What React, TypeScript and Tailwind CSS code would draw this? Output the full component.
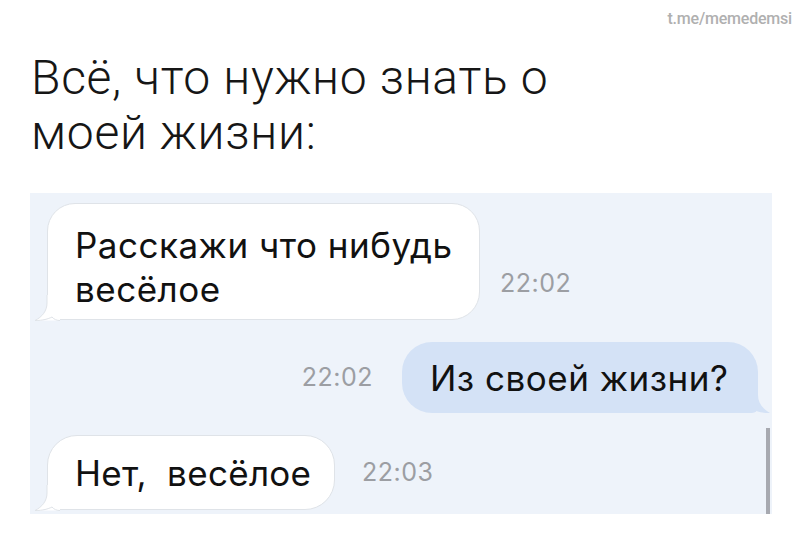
import React from "react";

function TailLeft({ className }: { className?: string }) {
    return (
        <svg
            className={className}
            width="26"
            height="26"
            viewBox="0 0 26 26"
            fill="none"
        >
            <path d="M13 0 L13 8 C13 16 8 22 1 25.5 L26 25.5 L26 0 Z" fill="#ffffff" />
            <path
                d="M13 0 L13 8 C13 16 8 22 1 25.5 C9 25.5 14 24 18 22 C20 24.5 23 25.5 26 25.5"
                stroke="#dfe3e8"
                strokeWidth="1"
            />
        </svg>
    );
}

function TailRight({ className }: { className?: string }) {
    return (
        <svg
            className={className}
            width="26"
            height="26"
            viewBox="0 0 26 26"
            fill="none"
        >
            <path d="M13 0 L13 8 C13 16 18 22 25 26 C17 26 12 24.5 8 22.5 C6 25 3 26 0 26 L0 0 Z" fill="#d4e2f6" />
        </svg>
    );
}

function Time({ children }: { children: React.ReactNode }) {
    return (
        <span className="text-[25px] leading-none text-[#9c9ea3] tracking-[0.5px]">
            {children}
        </span>
    );
}

export default function App() {
    return (
        <div className="w-[800px] h-[538px] bg-white overflow-hidden font-['Inter','Liberation_Sans',sans-serif]">
            <div className="flex justify-end pt-[9px] pr-[8px] h-[30px]">
                <span className="font-['Roboto',sans-serif] font-medium text-[16px] leading-[20px] text-[#b0b0b0] tracking-[-0.2px]">
                    t.me/memedemsi
                </span>
            </div>

            <h1 className="pl-[31px] pt-[20px] pb-[3px] font-['Roboto',sans-serif] font-light text-[48px] leading-[55px] text-[#161616] tracking-[0.7px]">
                Всё, что нужно знать о
                <br />
                моей жизни:
            </h1>

            <div className="relative ml-[30px] mt-[30px] w-[742px] h-[321px] bg-[#eef3fa] pt-[10px] pl-[17px] pr-[14px] flex flex-col gap-[22px] text-[#111111]">
                {/* first message */}
                <div className="flex items-end gap-[20px]">
                    <div className="relative w-[433px] h-[117px] bg-white border border-[#dfe3e8] rounded-[28px] rounded-bl-[6px] pl-[27px] pt-[19px] text-[35px] leading-[44px] tracking-[0.5px]">
                        Расскажи что нибудь
                        <br />
                        весёлое
                        <TailLeft className="absolute left-[-14px] bottom-[-1.5px]" />
                    </div>
                    <div className="mb-[22px]">
                        <Time>22:02</Time>
                    </div>
                </div>

                {/* reply */}
                <div className="flex items-center justify-end gap-[29px]">
                    <Time>22:02</Time>
                    <div className="relative h-[71px] w-[356px] bg-[#d4e2f6] rounded-[30px] rounded-br-[6px] pl-[28px] flex items-center text-[35px] leading-[44px] tracking-[0.5px]">
                        Из своей жизни?
                        <TailRight className="absolute right-[-13px] bottom-0" />
                    </div>
                </div>

                {/* answer */}
                <div className="flex items-center gap-[27px]">
                    <div className="relative h-[75px] w-[288px] bg-white border border-[#dfe3e8] rounded-[30px] rounded-bl-[6px] pl-[27px] flex items-center text-[35px] leading-[44px] tracking-[0.3px] whitespace-pre">
                        {"Нет,  весёлое"}
                        <TailLeft className="absolute left-[-14px] bottom-[-1.5px]" />
                    </div>
                    <Time>22:03</Time>
                </div>

                <div className="absolute right-[2px] top-[235px] bottom-0 w-[4px] bg-[#a7a9b0]" />
            </div>
        </div>
    );
}
